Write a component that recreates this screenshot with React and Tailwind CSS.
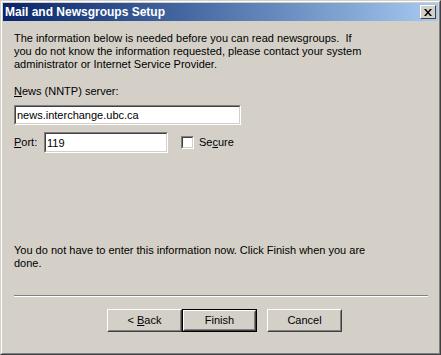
import { useState } from 'react'

// Win2000-style wizard dialog
function Sunken({ className = '', children }) {
  return (
    <div className={`border border-t-[#808080] border-l-[#808080] border-r-white border-b-white ${className}`}>
      <div className="w-full h-full border border-t-[#404040] border-l-[#404040] border-r-[#d4d0c8] border-b-[#d4d0c8] bg-white">
        {children}
      </div>
    </div>
  )
}

function Button({ children, isDefault }) {
  const outer = isDefault ? 'border border-black' : ''
  return (
    <div className={`w-[75px] h-[23px] ${outer}`}>
      <div className="w-full h-full border border-t-white border-l-white border-r-[#404040] border-b-[#404040]">
        <div className="w-full h-full flex items-center justify-center border border-t-[#d4d0c8] border-l-[#d4d0c8] border-r-[#808080] border-b-[#808080] text-[11px] text-black whitespace-pre">
          {children}
        </div>
      </div>
    </div>
  )
}

export default function App() {
  const [server, setServer] = useState('news.interchange.ubc.ca')
  const [port, setPort] = useState('119')
  const [secure, setSecure] = useState(false)

  return (
    <div className="w-[441px] h-[355px] bg-[#d4d0c8] border border-t-[#d4d0c8] border-l-[#d4d0c8] border-r-[#404040] border-b-[#404040] font-['Liberation_Sans',Arial,sans-serif]">
      <div className="w-full h-full border border-t-white border-l-white border-r-[#808080] border-b-[#808080] p-px flex flex-col">
        {/* title bar */}
        <div className="h-[18px] flex items-center justify-between bg-gradient-to-r from-[#0a246a] to-[#a6caf0] pl-[2px] pr-[2px]">
          <span className="text-white font-bold text-[12px] leading-none">Mail and Newsgroups Setup</span>
          <div className="w-[16px] h-[14px] bg-[#d4d0c8] border border-t-white border-l-white border-r-[#404040] border-b-[#404040] flex items-center justify-center">
            <svg width="8" height="7" viewBox="0 0 8 7">
              <path d="M0 0h2l2 2.5L6 0h2L5 3.5 8 7H6L4 4.5 2 7H0l3-3.5z" fill="#000" />
            </svg>
          </div>
        </div>

        <div className="flex-1 flex flex-col px-[11px] text-[11px] leading-[13px] text-black">
          <p className="mt-[11px] w-[400px]">
            The information below is needed before you can read newsgroups.&nbsp; If<br />
            you do not know the information requested, please contact your system<br />
            administrator or Internet Service Provider.
          </p>

          <label className="mt-[14px]">
            <span className="underline">N</span>ews (NNTP) server:
          </label>
          <Sunken className="mt-[7px] w-[227px] h-[20px]">
            <input
              value={server}
              onChange={e => setServer(e.target.value)}
              className="w-full h-full px-[1px] text-[11px] outline-none bg-white"
            />
          </Sunken>

          <div className="mt-[7px] flex items-center h-[21px]">
            <span className="w-[30px]"><span className="underline">P</span>ort:</span>
            <Sunken className="w-[124px] h-[21px]">
              <input
                value={port}
                onChange={e => setPort(e.target.value)}
                className="w-full h-full px-[1px] text-[11px] outline-none bg-white"
              />
            </Sunken>
            <button onClick={() => setSecure(!secure)} className="ml-[13px] flex items-center">
              <Sunken className="w-[13px] h-[13px]">
                {secure && (
                  <svg width="9" height="9" viewBox="0 0 9 9">
                    <path d="M1 4l2 2 5-5v2L3 8 1 6z" fill="#000" />
                  </svg>
                )}
              </Sunken>
              <span className="ml-[5px]">Se<span className="underline">c</span>ure</span>
            </button>
          </div>

          <p className="mt-[91px] w-[370px]">
            You do not have to enter this information now. Click Finish when you are done.
          </p>

          <div className="mt-[25px] w-[414px] border-t border-t-[#808080] border-b border-b-white" />

          <div className="mt-[12px] flex pl-[93px]">
            <Button>{'< '}<span className="underline">B</span>ack</Button>
            <Button isDefault>Finish</Button>
            <div className="w-[10px]" />
            <Button>Cancel</Button>
          </div>
        </div>
      </div>
    </div>
  )
}
